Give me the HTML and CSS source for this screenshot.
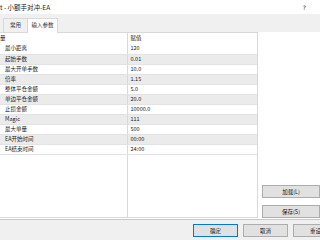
FILE: index.html
```html
<!DOCTYPE html>
<html>
<head>
  <meta charset="utf-8">
  <title>小额手对冲-EA</title>
  <link rel="stylesheet" href="styles.css">
</head>
<body>
  <div class="titlebar">
    <span class="title">t - 小额手对冲-EA</span>
    <span class="help">?</span>
  </div>

  <div class="tabs">
    <span class="tab">常用</span>
    <span class="tab active">输入参数</span>
  </div>

  <div class="main">
    <div class="panel">
      <table class="params">
        <tr class="head"><td class="name">量</td><td class="val">赋值</td></tr>
        <tr><td class="name">最小距离</td><td class="val">120</td></tr>
        <tr class="alt"><td class="name">起始手数</td><td class="val">0.01</td></tr>
        <tr><td class="name">最大开单手数</td><td class="val">10.0</td></tr>
        <tr class="alt"><td class="name">倍率</td><td class="val">1.15</td></tr>
        <tr><td class="name">整体平仓金额</td><td class="val">5.0</td></tr>
        <tr class="alt"><td class="name">单边平仓金额</td><td class="val">20.0</td></tr>
        <tr><td class="name">止损金额</td><td class="val">10000.0</td></tr>
        <tr class="alt"><td class="name">Magic</td><td class="val">111</td></tr>
        <tr><td class="name">最大单量</td><td class="val">500</td></tr>
        <tr class="alt"><td class="name">EA开始时间</td><td class="val">00:00</td></tr>
        <tr><td class="name">EA结束时间</td><td class="val">24:00</td></tr>
        <tr class="filler"><td class="name"></td><td class="val"></td></tr>
      </table>
    </div>
    <div class="side">
      <button class="btn side-btn">加载(L)</button>
      <button class="btn side-btn">保存(S)</button>
    </div>
  </div>

  <div class="footer">
    <button class="btn default">确定</button>
    <button class="btn">取消</button>
    <button class="btn">重设</button>
  </div>
</body>
</html>
```

FILE: styles.css
```css
html, body {
  margin: 0;
  padding: 0;
}

body {
  width: 320px;
  height: 240px;
  overflow: hidden;
  background: #fff;
  color: #1a1a1a;
  font-family: "Noto Sans CJK SC", "Noto Sans", sans-serif;
  font-size: 5.5px;
}

.titlebar {
  height: 14px;
  display: flex;
  align-items: center;
  justify-content: space-between;
  padding: 0 14px 0 0;
  box-sizing: border-box;
}

.title {
  font-size: 6.5px;
  white-space: nowrap;
}

.help {
  font-family: "DejaVu Sans", sans-serif;
  font-size: 6px;
}

.tabs {
  height: 18px;
  background: #f0f0f0;
  display: flex;
  align-items: flex-end;
  padding-left: 3px;
  box-sizing: border-box;
}

.tab {
  height: 14px;
  line-height: 13px;
  padding: 0;
  border: 1px solid #d9d9d9;
  border-bottom: none;
  box-sizing: border-box;
  width: 25px;
  text-align: center;
  white-space: nowrap;
  color: #333;
}

.tab.active {
  height: 15px;
  width: 30px;
  background: #fff;
  border-left: none;
  position: relative;
  top: 1px;
}

.main {
  height: 187px;
  display: flex;
}

.panel {
  width: 266px;
  height: 186px;
  box-sizing: border-box;
  border: 1px solid #d9d9d9;
  border-left: none;
  overflow: hidden;
}

.params {
  width: 100%;
  height: 100%;
  border-collapse: collapse;
}

.params td {
  height: 10px;
  padding: 0;
  border-bottom: 1px solid #e3e3e3;
  box-sizing: border-box;
  line-height: 9px;
  white-space: nowrap;
  vertical-align: middle;
}

.params .name {
  width: 127px;
  padding-left: 5px;
  border-right: 1px solid #d9d9d9;
}

.params .val {
  padding-left: 3px;
}

.params .head td {
  height: 11px;
  border-bottom: none;
}

.params .head .name {
  padding-left: 0;
}

.params .alt td {
  background: #ebebeb;
}

.params .filler td {
  height: auto;
  border-bottom: none;
}

.side {
  flex: 1;
  display: flex;
  flex-direction: column;
  justify-content: flex-end;
  gap: 7px;
  padding: 0 0 1px 4px;
}

.btn {
  font-family: "Noto Sans CJK SC", "Noto Sans", sans-serif;
  font-size: 5.5px;
  color: #1a1a1a;
  background: #e1e1e1;
  border: 1px solid #adadad;
  height: 13px;
  width: 45px;
  padding: 0;
  flex-shrink: 0;
  white-space: nowrap;
}

.side-btn {
  width: 58px;
}

.footer {
  height: 21px;
  border-top: 1px solid #c8c8c8;
  background: #f0f0f0;
  display: flex;
  align-items: center;
  gap: 5px;
  padding-left: 193px;
}

.btn.default {
  border-color: #0078d7;
}
```
